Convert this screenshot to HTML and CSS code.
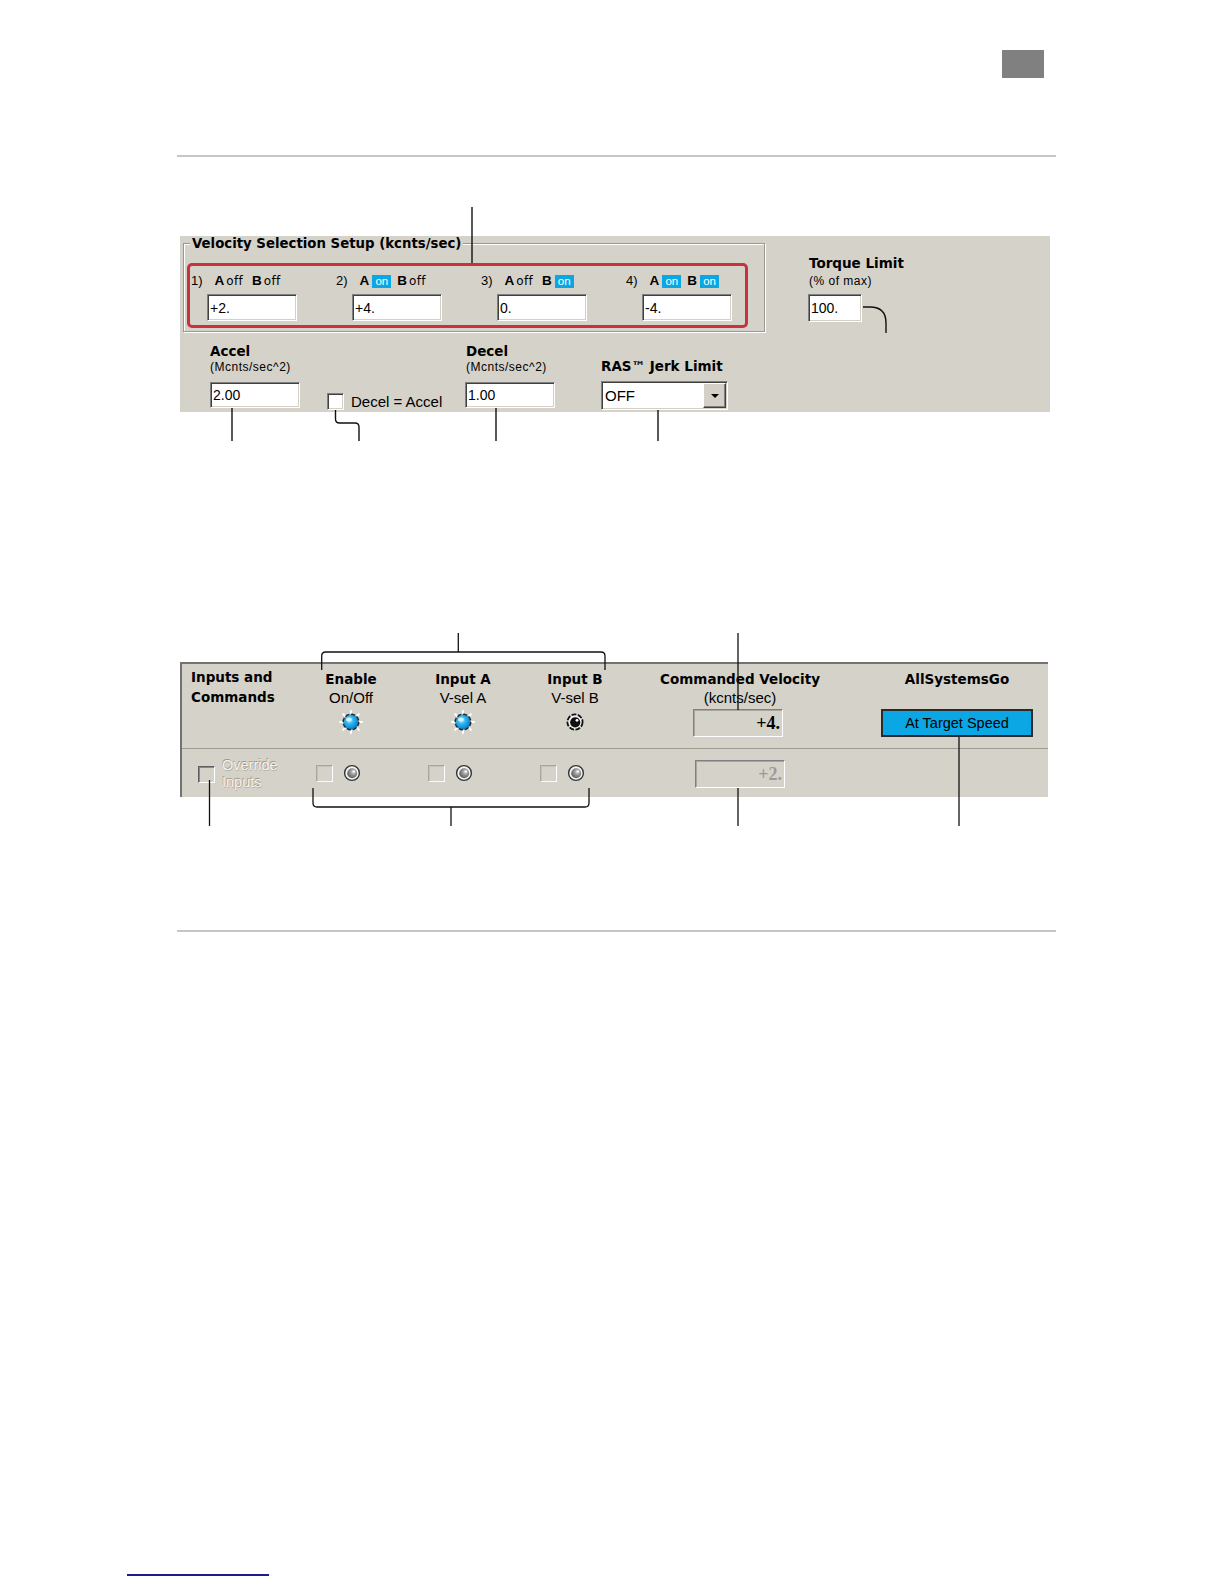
FILE: index.html
```html
<!DOCTYPE html>
<html>
<head>
<meta charset="utf-8">
<link rel="stylesheet" href="styles.css">
</head>
<body>
<div class="page">
  <header class="top"><div class="tab"></div></header>
  <div class="rule rule1"></div>

  <figure class="fig fig1">
    <div class="panel panel1">
      <div class="rowA">
        <div class="group">
          <div class="group-title">Velocity Selection Setup (kcnts/sec)</div>
          <div class="redbox">
            <div class="vcol">
              <div class="vlabel"><span class="num">1)</span><b class="ab a">A</b><span class="off">off</span><b class="ab b">B</b><span class="off">off</span></div>
              <div class="field vinput">+2.</div>
            </div>
            <div class="vcol">
              <div class="vlabel"><span class="num">2)</span><b class="ab a">A</b><span class="on">on</span><b class="ab b">B</b><span class="off">off</span></div>
              <div class="field vinput">+4.</div>
            </div>
            <div class="vcol">
              <div class="vlabel"><span class="num">3)</span><b class="ab a">A</b><span class="off">off</span><b class="ab b">B</b><span class="on">on</span></div>
              <div class="field vinput">0.</div>
            </div>
            <div class="vcol">
              <div class="vlabel"><span class="num">4)</span><b class="ab a">A</b><span class="on">on</span><b class="ab b">B</b><span class="on">on</span></div>
              <div class="field vinput">-4.</div>
            </div>
          </div>
        </div>
        <div class="torque">
          <div class="h1">Torque Limit</div>
          <div class="sub sub-torque">(% of max)</div>
          <div class="field tinput">100.</div>
        </div>
      </div>
      <div class="rowB">
        <div class="blk accel">
          <div class="h1">Accel</div>
          <div class="sub">(Mcnts/sec^2)</div>
          <div class="field ainput">2.00</div>
        </div>
        <div class="cbwrap">
          <div class="cb"></div>
          <span class="cbtext">Decel = Accel</span>
        </div>
        <div class="blk decel">
          <div class="h1">Decel</div>
          <div class="sub">(Mcnts/sec^2)</div>
          <div class="field ainput">1.00</div>
        </div>
        <div class="ras">
          <div class="h1">RAS™ Jerk Limit</div>
          <div class="dd"><span class="ddtext">OFF</span><span class="ddbtn"><span class="tri"></span></span></div>
        </div>
      </div>
    </div>
    <svg class="callouts" width="870" height="234" viewBox="180 207 870 234">
      <g fill="none" stroke="#111" stroke-width="1.4">
        <path d="M472 207V263"/>
        <path d="M232 408V441"/>
        <path d="M335.5 410V419Q335.5 423 339.5 423H355Q359 423 359 427V441"/>
        <path d="M496 408V441"/>
        <path d="M658 410V441"/>
        <path d="M863 307H870Q886 307 886 323V333"/>
      </g>
    </svg>
  </figure>

  <figure class="fig fig2">
    <div class="panel panel2">
      <div class="p2row p2r1">
        <div class="c0 title2">Inputs and<br>Commands</div>
        <div class="cc">
          <div class="h2">Enable</div>
          <div class="s2">On/Off</div>
          <svg class="led" width="24" height="24" viewBox="0 0 24 24">
            <defs>
              <radialGradient id="gBlue" cx="40%" cy="38%" r="68%">
                <stop offset="0" stop-color="#b4e9ff"/>
                <stop offset=".4" stop-color="#2ab2f2"/>
                <stop offset="1" stop-color="#0870b8"/>
              </radialGradient>
              <radialGradient id="gGray" cx="62%" cy="36%" r="70%">
                <stop offset="0" stop-color="#d8d8d8"/>
                <stop offset=".5" stop-color="#8c8c8c"/>
                <stop offset="1" stop-color="#5a5a5a"/>
              </radialGradient>
            </defs>
            <path d="M12 1V3.4M12 20.6V23M1 12H3.4M20.6 12H23M4.2 4.2L5.9 5.9M18.1 18.1L19.8 19.8M4.2 19.8L5.9 18.1M18.1 5.9L19.8 4.2" stroke="#fff" stroke-width="2" stroke-linecap="round"/>
            <circle cx="12" cy="12" r="7.8" fill="url(#gBlue)" stroke="#262626" stroke-width="1.4" stroke-dasharray="4.2 1.9"/>
            <ellipse cx="10" cy="9.4" rx="2.8" ry="2" fill="#e2f6ff" opacity=".85"/>
          </svg>
        </div>
        <div class="cc">
          <div class="h2">Input A</div>
          <div class="s2">V-sel A</div>
          <svg class="led" width="24" height="24" viewBox="0 0 24 24">
            <path d="M12 1V3.4M12 20.6V23M1 12H3.4M20.6 12H23M4.2 4.2L5.9 5.9M18.1 18.1L19.8 19.8M4.2 19.8L5.9 18.1M18.1 5.9L19.8 4.2" stroke="#fff" stroke-width="2" stroke-linecap="round"/>
            <circle cx="12" cy="12" r="7.8" fill="url(#gBlue)" stroke="#262626" stroke-width="1.4" stroke-dasharray="4.2 1.9"/>
            <ellipse cx="10" cy="9.4" rx="2.8" ry="2" fill="#e2f6ff" opacity=".85"/>
          </svg>
        </div>
        <div class="cc">
          <div class="h2">Input B</div>
          <div class="s2">V-sel B</div>
          <svg class="led" width="24" height="24" viewBox="0 0 24 24">
            <circle cx="12" cy="12" r="7.6" fill="#f2f2f2" stroke="#111" stroke-width="1.8" stroke-dasharray="5 1.4"/>
            <circle cx="12.2" cy="12.3" r="5.1" fill="#111"/>
            <circle cx="14" cy="10.3" r="1.4" fill="#fff"/>
          </svg>
        </div>
        <div class="cc">
          <div class="h2">Commanded Velocity</div>
          <div class="s2">(kcnts/sec)</div>
          <div class="ro ro1">+4.</div>
        </div>
        <div class="cc c5">
          <div class="h2">AllSystemsGo</div>
          <div class="atspeed">At Target Speed</div>
        </div>
      </div>
      <div class="p2row p2r2">
        <div class="c0 ovrcell">
          <div class="cb cb-ovr"></div>
          <div class="ovr">Override<br>Inputs</div>
        </div>
        <div class="cin">
          <div class="cb cb-dis"></div>
          <svg class="led2" width="20" height="20" viewBox="0 0 20 20">
            <circle cx="10" cy="10" r="7.4" fill="#f4f4f4" stroke="#333" stroke-width="1.4"/>
            <circle cx="10.2" cy="10.3" r="5" fill="url(#gGray)"/>
            <circle cx="11.8" cy="8.6" r="1.3" fill="#eee"/>
          </svg>
        </div>
        <div class="cin">
          <div class="cb cb-dis"></div>
          <svg class="led2" width="20" height="20" viewBox="0 0 20 20">
            <circle cx="10" cy="10" r="7.4" fill="#f4f4f4" stroke="#333" stroke-width="1.4"/>
            <circle cx="10.2" cy="10.3" r="5" fill="url(#gGray)"/>
            <circle cx="11.8" cy="8.6" r="1.3" fill="#eee"/>
          </svg>
        </div>
        <div class="cin">
          <div class="cb cb-dis"></div>
          <svg class="led2" width="20" height="20" viewBox="0 0 20 20">
            <circle cx="10" cy="10" r="7.4" fill="#f4f4f4" stroke="#333" stroke-width="1.4"/>
            <circle cx="10.2" cy="10.3" r="5" fill="url(#gGray)"/>
            <circle cx="11.8" cy="8.6" r="1.3" fill="#eee"/>
          </svg>
        </div>
        <div class="cro">
          <div class="ro ro2">+2.</div>
        </div>
        <div></div>
      </div>
    </div>
    <svg class="callouts" width="868" height="193" viewBox="180 633 868 193">
      <g fill="none" stroke="#111" stroke-width="1.3">
        <path d="M321.7 670V656Q321.7 652 325.7 652H601Q605 652 605 656V670"/>
        <path d="M458.3 633V652"/>
        <path d="M738 633V710"/>
        <path d="M313 788V803Q313 807 317 807H585Q589 807 589 803V788"/>
        <path d="M451 807V826"/>
        <path d="M738 788V826"/>
        <path d="M959 737V826"/>
        <path d="M209.5 780V826"/>
      </g>
    </svg>
  </figure>

  <div class="rule rule2"></div>
  <footer class="foot"></footer>
</div>
</body>
</html>
```

FILE: styles.css
```css
body {
  margin: 0;
  background: #fff;
}

.page {
  width: 1224px;
  height: 1584px;
  display: flex;
  flex-direction: column;
  align-items: flex-start;
  font-family: "Liberation Sans", Arial, sans-serif;
  color: #000;
  overflow: hidden;
}

.top {
  width: 1224px;
  box-sizing: border-box;
  display: flex;
  justify-content: flex-end;
  padding: 50px 180px 0 0;
}

.tab {
  width: 42px;
  height: 28px;
  background: #808080;
}

.rule {
  width: 879px;
  height: 2px;
  background: #c6c6c6;
  margin-left: 177px;
}

.rule1 { margin-top: 77px; }
.rule2 { margin-top: 104px; }

.fig {
  position: relative;
  margin: 0 0 0 180px;
}

.fig1 {
  margin-top: 50px;
  width: 870px;
  height: 234px;
}

.fig2 {
  margin-top: 192px;
  width: 868px;
  height: 193px;
}

.callouts {
  position: absolute;
  left: 0;
  top: 0;
  overflow: visible;
  pointer-events: none;
}

.panel {
  background: #d5d2ca;
}

/* ---------- panel 1 ---------- */
.panel1 {
  margin-top: 29px;
  width: 870px;
  height: 176px;
  display: flex;
  flex-direction: column;
}

.rowA {
  display: flex;
  height: 96px;
}

.group {
  position: relative;
  box-sizing: border-box;
  margin: 7px 0 0 3px;
  width: 582px;
  height: 89px;
  border: 1px solid #9a978f;
  box-shadow: inset 1px 1px 0 #fff, 1px 1px 0 #fff;
}

.group-title {
  position: absolute;
  left: 6px;
  top: -8px;
  padding: 0 2px;
  background: #d5d2ca;
  font: bold 13.3px/15px "DejaVu Sans", sans-serif;
  white-space: nowrap;
}

.redbox {
  box-sizing: border-box;
  margin: 19px 0 0 3px;
  width: 561px;
  height: 65px;
  border: 3px solid #c8323e;
  border-radius: 5px;
  padding: 7px 0 4px 1px;
  display: grid;
  grid-template-columns: repeat(4, 145px);
}

.vcol {
  display: flex;
  flex-direction: column;
}

.vlabel {
  height: 15px;
  font-size: 13px;
  line-height: 15px;
  white-space: nowrap;
}

.ab {
  font: bold 13.5px/15px "Liberation Sans", Arial, sans-serif;
}

.ab.a { margin-left: 12px; }
.ab.b { margin-left: 9px; }
.on + .ab.b { margin-left: 6px; }

.off {
  margin-left: 2px;
  font: 12px/15px "DejaVu Sans", sans-serif;
  letter-spacing: 0.3px;
}

.on {
  display: inline-block;
  margin-left: 3px;
  width: 19px;
  height: 13px;
  background: #0ba6e4;
  color: #fff;
  font: 11.5px/13px "Liberation Sans", Arial, sans-serif;
  text-align: center;
}

.field {
  box-sizing: border-box;
  display: flex;
  align-items: center;
  padding-left: 2px;
  background: #fff;
  border: 1px solid;
  border-color: #808080 #fff #fff #808080;
  box-shadow: inset 1px 1px 0 #404040, inset -1px -1px 0 #d4d0c8;
  font: 14px/16px "Liberation Sans", Arial, sans-serif;
}

.vinput {
  margin: 6px 0 0 16px;
  width: 90px;
  height: 27px;
}

.torque {
  display: flex;
  flex-direction: column;
  margin-left: 44px;
  padding-top: 20px;
}

.h1 {
  font: bold 13.5px/15px "DejaVu Sans", sans-serif;
  white-space: nowrap;
}

.sub {
  margin-top: 2px;
  font: 12px/13px "Liberation Sans", Arial, sans-serif;
  letter-spacing: 0.5px;
  white-space: nowrap;
}

.sub-torque {
  margin-top: 4px;
}

.tinput {
  margin: 6px 0 0 -1px;
  width: 54px;
  height: 28px;
}

.rowB {
  display: flex;
  height: 80px;
}

.blk {
  display: flex;
  flex-direction: column;
  padding-top: 12px;
}

.accel {
  margin-left: 30px;
  width: 117px;
}

.decel {
  width: 136px;
}

.decel .h1,
.decel .sub {
  padding-left: 1px;
}

.ainput {
  margin-top: 8px;
  width: 90px;
  height: 26px;
}

.cbwrap {
  width: 138px;
  padding-top: 61px;
  display: flex;
  align-items: center;
  height: 17px;
}

.cb {
  box-sizing: border-box;
  width: 17px;
  height: 17px;
  flex: none;
  background: #fff;
  border: 1px solid;
  border-color: #808080 #fff #fff #808080;
  box-shadow: inset 1px 1px 0 #404040, inset -1px -1px 0 #d4d0c8;
}

.cbtext {
  margin-left: 7px;
  font: 15px/16px "Liberation Sans", Arial, sans-serif;
  white-space: nowrap;
}

.ras {
  display: flex;
  flex-direction: column;
  padding-top: 27px;
}

.dd {
  box-sizing: border-box;
  display: flex;
  align-items: center;
  margin-top: 7px;
  width: 127px;
  height: 29px;
  background: #fff;
  border: 1px solid;
  border-color: #808080 #fff #fff #808080;
  box-shadow: inset 1px 1px 0 #404040, inset -1px -1px 0 #d4d0c8;
  padding: 1px;
}

.ddtext {
  padding-left: 2px;
  font: 15px/16px "Liberation Sans", Arial, sans-serif;
}

.ddbtn {
  box-sizing: border-box;
  margin-left: auto;
  width: 23px;
  height: 25px;
  display: flex;
  align-items: center;
  justify-content: center;
  background: #d4d0c8;
  border: 1px solid;
  border-color: #fff #404040 #404040 #fff;
  box-shadow: inset -1px -1px 0 #808080;
}

.tri {
  width: 0;
  height: 0;
  border-left: 4px solid transparent;
  border-right: 4px solid transparent;
  border-top: 4px solid #000;
}

/* ---------- panel 2 ---------- */
.panel2 {
  margin-top: 29px;
  width: 868px;
  height: 135px;
  box-sizing: border-box;
  border-top: 2px solid #737373;
  border-left: 2px solid #737373;
}

.p2row {
  display: grid;
  grid-template-columns: 113px 112px 112px 112px 218px 199px;
}

.p2r1 {
  height: 84px;
  border-bottom: 1px solid #9d9a92;
}

.p2r2 {
  height: 48px;
}

.title2 {
  padding: 3px 0 0 9px;
  font: bold 13.5px/20px "DejaVu Sans", sans-serif;
}

.cc {
  display: flex;
  flex-direction: column;
  align-items: center;
  padding-top: 7px;
}

.c5 {
  padding-left: 17px;
}

.h2 {
  font: bold 13.5px/16px "DejaVu Sans", sans-serif;
  white-space: nowrap;
}

.s2 {
  margin-top: 2.5px;
  font: 15px/16px "Liberation Sans", Arial, sans-serif;
  white-space: nowrap;
}

.led {
  margin-top: 4.5px;
}

.ro {
  box-sizing: border-box;
  display: flex;
  align-items: center;
  justify-content: flex-end;
  padding-right: 2px;
  width: 90px;
  height: 28px;
  background: #d5d2ca;
  border: 1px solid;
  border-color: #808080 #fff #fff #808080;
  box-shadow: inset 1px 1px 0 #a9a69e;
  font: bold 18px/20px "Liberation Serif", "Times New Roman", serif;
}

.ro1 {
  margin-top: 3.5px;
  margin-right: 4px;
}

.ro2 {
  margin-top: 11px;
  color: #9c9a94;
}

.atspeed {
  box-sizing: border-box;
  display: flex;
  align-items: center;
  justify-content: center;
  margin-top: 22px;
  width: 152px;
  height: 28px;
  background: #0ba6e4;
  border: 2px solid #2a2a2a;
  font: 14.5px/16px "Liberation Sans", Arial, sans-serif;
  white-space: nowrap;
}

.ovrcell {
  display: flex;
  align-items: flex-start;
}

.cb-ovr {
  margin: 17px 0 0 16px;
  background: #d5d2ca;
  border-color: #5e5e5e #fff #fff #5e5e5e;
  box-shadow: inset 1px 1px 0 #8a8880;
}

.ovr {
  margin: 8px 0 0 7px;
  font: 14.5px/17px "Liberation Sans", Arial, sans-serif;
  color: #f4f3ef;
  text-shadow: -0.6px -0.6px 0 #9a978f, 0.5px 0.5px 0 #b6b3ab;
}

.cin {
  display: flex;
  align-items: flex-start;
}

.cb-dis {
  margin: 16px 0 0 21px;
  background: #d5d2ca;
  border-color: #a9a69e #fbfbfb #fbfbfb #a9a69e;
  box-shadow: inset 1px 1px 0 #c4c1b9;
}

.led2 {
  margin: 14px 0 0 9px;
}

.cro {
  display: flex;
  justify-content: center;
}

.foot {
  margin: 642px 0 0 127px;
  width: 142px;
  height: 2px;
  background: #1b1b8f;
}
```
